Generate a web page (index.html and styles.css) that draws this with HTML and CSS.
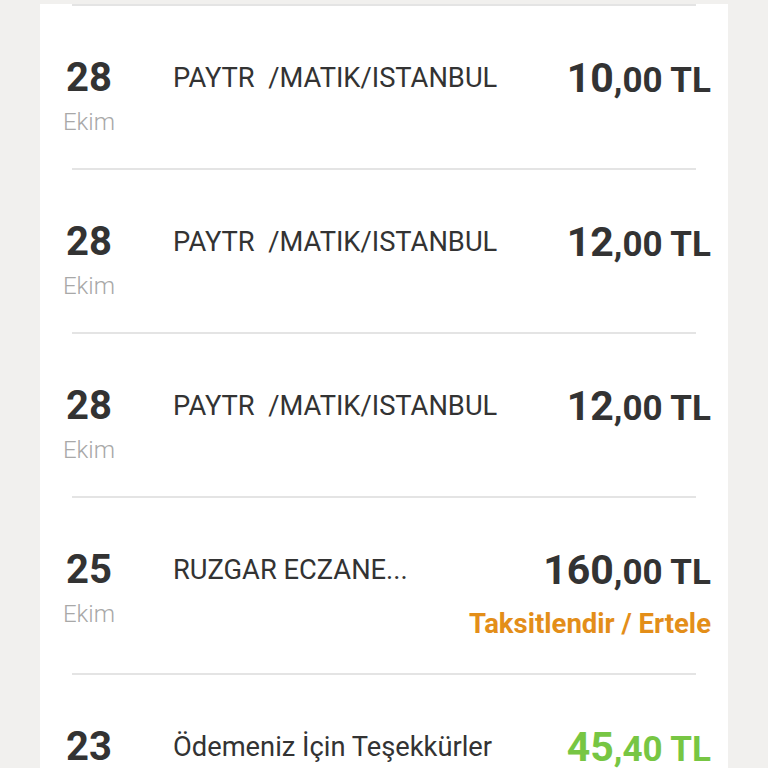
FILE: index.html
```html
<!DOCTYPE html>
<html lang="tr">
<head>
<meta charset="utf-8">
<link rel="stylesheet" href="styles.css">
</head>
<body>
<div class="card">
  <div class="divider first"></div>
  <div class="row">
    <div class="date"><div class="day">28</div><div class="month">Ekim</div></div>
    <div class="desc">PAYTR&nbsp; /MATIK/ISTANBUL</div>
    <div class="amount"><div class="sum"><span class="int">10</span>,00 TL</div></div>
  </div>
  <div class="divider"></div>
  <div class="row">
    <div class="date"><div class="day">28</div><div class="month">Ekim</div></div>
    <div class="desc">PAYTR&nbsp; /MATIK/ISTANBUL</div>
    <div class="amount"><div class="sum"><span class="int">12</span>,00 TL</div></div>
  </div>
  <div class="divider"></div>
  <div class="row">
    <div class="date"><div class="day">28</div><div class="month">Ekim</div></div>
    <div class="desc">PAYTR&nbsp; /MATIK/ISTANBUL</div>
    <div class="amount"><div class="sum"><span class="int">12</span>,00 TL</div></div>
  </div>
  <div class="divider"></div>
  <div class="row">
    <div class="date"><div class="day">25</div><div class="month">Ekim</div></div>
    <div class="desc">RUZGAR ECZANE...</div>
    <div class="amount"><div class="sum"><span class="int">160</span>,00 TL</div><div class="action">Taksitlendir / Ertele</div></div>
  </div>
  <div class="divider"></div>
  <div class="row">
    <div class="date"><div class="day">23</div><div class="month">Ekim</div></div>
    <div class="desc">Ödemeniz İçin Teşekkürler</div>
    <div class="amount"><div class="sum paid"><span class="int">45</span>,40 TL</div></div>
  </div>
</div>
</body>
</html>
```
FILE: styles.css
```css
html, body {
  margin: 0;
  padding: 0;
  background: #f1f0ee;
  font-family: Roboto, "Liberation Sans", sans-serif;
  height: 768px;
  overflow: hidden;
}
.card {
  width: 688px;
  margin-left: 40px;
  background: #ffffff;
  min-height: 768px;
}
.divider {
  height: 2px;
  background: #e4e4e4;
  margin: 0 32px;
}
.divider.first {
  margin-top: 4px;
}
.row {
  display: flex;
  align-items: flex-start;
  padding: 50px 17px 24px 13px;
}
.date {
  width: 72px;
  text-align: center;
}
.day {
  font-size: 40px;
  font-weight: 700;
  color: #333333;
  line-height: 44px;
}
.month {
  font-size: 24px;
  font-weight: 300;
  color: #a8a8a8;
  line-height: 44px;
}
.desc {
  flex: 1;
  margin-left: 48px;
  font-size: 27.3px;
  color: #333333;
  line-height: 44px;
  white-space: nowrap;
}
.amount {
  text-align: right;
}
.sum {
  font-size: 35px;
  font-weight: 700;
  color: #333333;
  line-height: 44px;
  height: 44px;
  padding-top: 2px;
  white-space: nowrap;
}
.sum .int {
  font-size: 41px;
  line-height: 1;
}
.sum.paid {
  color: #77c643;
}
.action {
  margin-top: 5px;
  font-size: 27.5px;
  font-weight: 700;
  color: #e38e19;
  line-height: 50px;
  white-space: nowrap;
}
```
